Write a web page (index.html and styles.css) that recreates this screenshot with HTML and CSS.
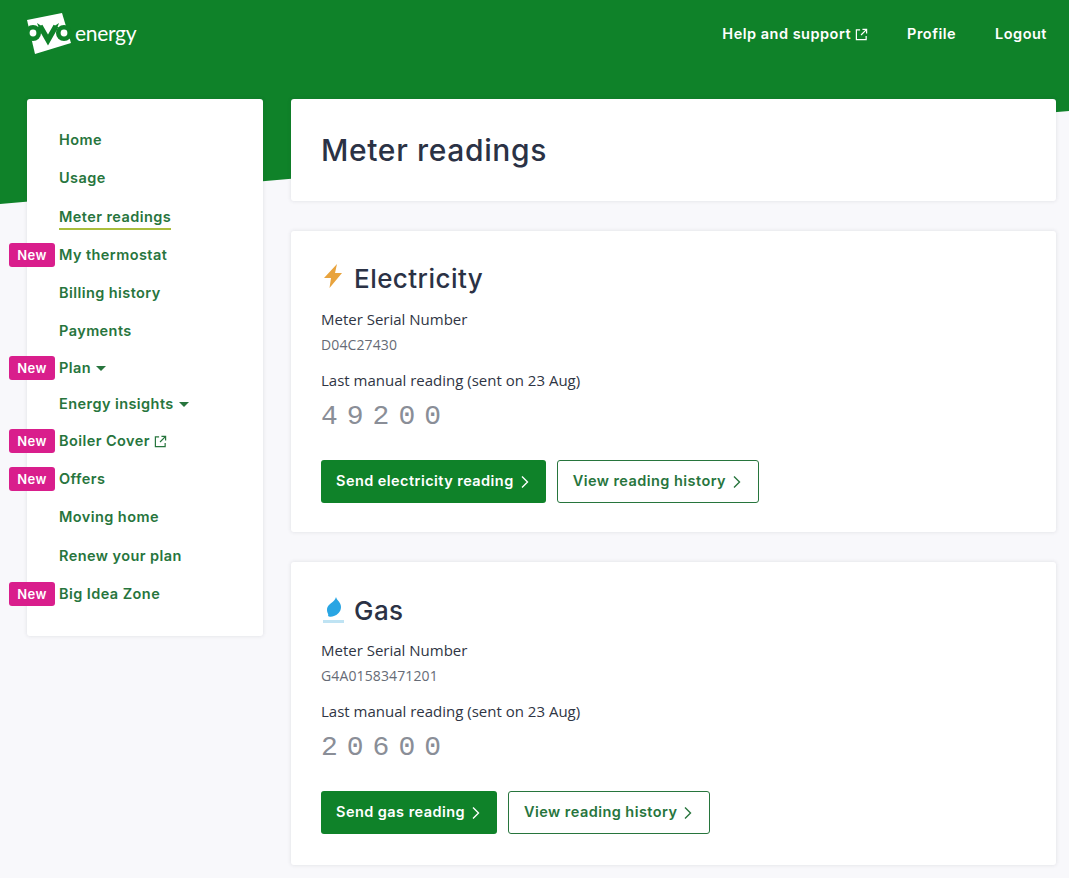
FILE: index.html
```html
<!DOCTYPE html>
<html lang="en">
<head>
<meta charset="utf-8">
<title>Meter readings</title>
<link rel="stylesheet" href="styles.css">
</head>
<body>
<svg class="backdrop" viewBox="0 0 1069 204" preserveAspectRatio="none" aria-hidden="true"><polygon points="0,0 1069,0 1069,111 0,204" fill="#0f8229"/></svg>
<header class="topbar">
  <a class="logo" href="#">
    <svg class="logo-mark" viewBox="0 0 45 44" aria-hidden="true">
      <polygon points="0,8 35,1 44,31 8,42" fill="#fff"/>
      <circle cx="6" cy="21" r="8" fill="#0f8229"/>
      <circle cx="6" cy="21" r="3.4" fill="#fff"/>
      <path d="M13 14 21 28 29 14" fill="none" stroke="#0f8229" stroke-width="5.500"/>
      <path d="M10 11 16 15 13 19ZM32 11 26 15 29 19Z" fill="#0f8229"/>
      <circle cx="37" cy="21" r="8" fill="#0f8229"/>
      <circle cx="37" cy="21" r="3.400" fill="#fff"/>
    </svg>
    <span class="logo-text">energy</span>
  </a>
  <nav class="topnav">
    <a href="#">Help and support<svg class="ext" viewBox="0 0 14 14" aria-hidden="true"><path d="M5.5 2H1.5v10.5H12V8.500M8 1.500h4.500V6M12.500 1.500 6.500 7.500" fill="none" stroke="currentColor" stroke-width="1.3"/></svg></a>
    <a href="#">Profile</a>
    <a href="#">Logout</a>
  </nav>
</header>
<div class="layout">
  <aside class="sidebar">
    <ul class="menu">
      <li class="row-a"><a href="#">Home</a></li>
      <li class="row-b"><a href="#">Usage</a></li>
      <li class="row-a"><a class="current" href="#">Meter readings</a></li>
      <li class="row-a"><span class="badge">New</span><a href="#">My thermostat</a></li>
      <li class="row-a"><a href="#">Billing history</a></li>
      <li class="row-c"><a href="#">Payments</a></li>
      <li class="row-d"><span class="badge">New</span><a href="#">Plan<i class="caret"></i></a></li>
      <li class="row-c"><a href="#">Energy insights<i class="caret"></i></a></li>
      <li class="row-a"><span class="badge">New</span><a href="#">Boiler Cover<svg class="ext" viewBox="0 0 14 14" aria-hidden="true"><path d="M5.5 2H1.5v10.5H12V8.500M8 1.500h4.500V6M12.500 1.500 6.500 7.500" fill="none" stroke="currentColor" stroke-width="1.3"/></svg></a></li>
      <li class="row-a"><span class="badge">New</span><a href="#">Offers</a></li>
      <li class="row-b"><a href="#">Moving home</a></li>
      <li class="row-a"><a href="#">Renew your plan</a></li>
      <li class="row-a"><span class="badge">New</span><a href="#">Big Idea Zone</a></li>
    </ul>
  </aside>
  <main class="main">
    <section class="card title-card"><h1>Meter readings</h1></section>
    <section class="card meter">
      <h2><svg class="fuel" viewBox="0 0 24 28" aria-hidden="true"><path d="M16 0 3 14h7L8.500 24 21 9h-7Z" fill="#e8a33d"/></svg>Electricity</h2>
      <h3>Meter Serial Number</h3>
      <p class="serial">D04C27430</p>
      <h3>Last manual reading (sent on 23 Aug)</h3>
      <p class="digits">49200</p>
      <div class="actions">
        <a class="btn solid" href="#">Send electricity reading<svg class="chev" viewBox="0 0 8 12" aria-hidden="true"><path d="M1 .5 6.500 6 1 11.500" fill="none" stroke="currentColor" stroke-width="1.4"/></svg></a>
        <a class="btn outline" href="#">View reading history<svg class="chev" viewBox="0 0 8 12" aria-hidden="true"><path d="M1 .5 6.500 6 1 11.500" fill="none" stroke="currentColor" stroke-width="1.4"/></svg></a>
      </div>
    </section>
    <section class="card meter">
      <h2><svg class="fuel" viewBox="0 -4 24 28" aria-hidden="true"><path d="M15-3C15.500 0 20 2 20 7 20 12 16 15 13 16 11 17 8 17 7 16 8 14 6 13 6 10 6 6 9 4 11 2.500 13 1 14.500-1 15-3Z" fill="#29a5e3"/><rect x="2" y="20" width="21" height="3" fill="#bfe3f3"/></svg>Gas</h2>
      <h3>Meter Serial Number</h3>
      <p class="serial">G4A01583471201</p>
      <h3>Last manual reading (sent on 23 Aug)</h3>
      <p class="digits">20600</p>
      <div class="actions">
        <a class="btn solid" href="#">Send gas reading<svg class="chev" viewBox="0 0 8 12" aria-hidden="true"><path d="M1 .5 6.500 6 1 11.500" fill="none" stroke="currentColor" stroke-width="1.4"/></svg></a>
        <a class="btn outline" href="#">View reading history<svg class="chev" viewBox="0 0 8 12" aria-hidden="true"><path d="M1 .5 6.500 6 1 11.500" fill="none" stroke="currentColor" stroke-width="1.4"/></svg></a>
      </div>
    </section>
  </main>
</div>
</body>
</html>
```
FILE: styles.css
```css
* { box-sizing: border-box; }
html, body { margin: 0; padding: 0; }
body {
  position: relative;
  background: #f8f8fb;
  font-family: "Open Sans", "Liberation Sans", sans-serif;
  color: #2b3245;
  height: 878px;
  overflow: hidden;
}
a { text-decoration: none; color: inherit; }
.backdrop { position: absolute; left: 0; top: 0; width: 1069px; height: 204px; z-index: 0; }
.topbar {
  position: relative;
  z-index: 1;
  height: 99px;
  padding: 12px 22px 0 27px;
  display: flex;
  justify-content: space-between;
  align-items: flex-start;
}
.logo { display: flex; align-items: flex-start; color: #fff; }
.logo-mark { width: 45px; height: 44px; display: block; }
.logo-text { font: 400 21px/1 "Lato", sans-serif; margin: 10px 0 0 3px; letter-spacing: -.3px; }
.topnav { display: flex; gap: 39px; padding-top: 13px; font: 600 14.5px/18px "Inter", sans-serif; letter-spacing: .5px; color: #fff; }
.topnav a { display: flex; align-items: center; }
.ext { width: 13px; height: 13px; margin-left: 4px; }
.layout {
  position: relative;
  z-index: 1;
  display: flex;
  gap: 28px;
  padding: 0 13px 0 27px;
  align-items: flex-start;
}
.sidebar {
  width: 236px;
  height: 537px;
  background: #fff;
  border-radius: 3px;
  box-shadow: 0 0 4px rgba(30, 40, 60, .12);
  padding: 31px 0 0 32px;
}
.menu { list-style: none; margin: 0; padding: 0; font: 600 14.5px/20px "Inter", sans-serif; letter-spacing: .43px; color: #27753d; }
.menu li { position: relative; }
.row-a { height: 38px; }
.row-b { height: 39px; }
.row-c { height: 37px; }
.row-d { height: 36px; }
.menu a { display: inline-flex; align-items: center; }
.current { border-bottom: 2px solid #a9bd3c; height: 23px; padding-bottom: 1px; }
.caret { width: 0; height: 0; margin-left: 5px; border: 5px solid transparent; border-top-color: #27753d; border-bottom: 0; }
.badge {
  position: absolute;
  left: -50px;
  top: -2px;
  width: 46px;
  height: 24px;
  border-radius: 3px;
  background: #d91e8c;
  color: #fff;
  font: 600 13px/24px "Inter", sans-serif;
  letter-spacing: .4px;
  text-align: center;
}
.main { width: 765px; display: flex; flex-direction: column; gap: 30px; }
.card { background: #fff; border-radius: 3px; box-shadow: 0 0 4px rgba(30, 40, 60, .12); padding: 0 30px; }
.title-card { height: 102px; display: flex; align-items: center; }
h1 { margin: 0; font: 500 30px/1 "Inter", sans-serif; letter-spacing: .65px; color: #2b3245; }
.meter { height: 301px; padding-top: 30px; }
.meter + .meter { height: 303px; padding-top: 31px; }
h2 { margin: 0 0 14px; height: 35px; display: flex; align-items: center; font: 500 26px/35px "Inter", sans-serif; letter-spacing: .45px; color: #2b3245; }
.meter + .meter h2 { margin-bottom: 13px; }
.fuel { width: 24px; height: 28px; margin: 0 9px 2px 0; flex: none; }
h3 { margin: 0; font: 500 15px/18px "Open Sans", sans-serif; color: #2f3544; }
.serial { margin: 7px 0 16px; font: 400 14px/20px "Open Sans", sans-serif; letter-spacing: .12px; color: #666b76; }
.digits {
  margin: 13px 0 28px;
  font: 400 28px/30px "Liberation Mono", monospace;
  letter-spacing: 9px;
  color: #8a8e97;
}
.actions { display: flex; gap: 11px; }
.btn {
  height: 43px;
  padding: 0 17px 0 15px;
  border-radius: 3px;
  display: inline-flex;
  align-items: center;
  font: 600 14.5px/1 "Inter", sans-serif;
  letter-spacing: .45px;
}
.solid { background: #0f8229; color: #fff; }
.outline { background: #fff; color: #27753d; border: 1px solid #27753d; }
.chev { width: 8px; height: 12px; margin-left: 7px; }
```
